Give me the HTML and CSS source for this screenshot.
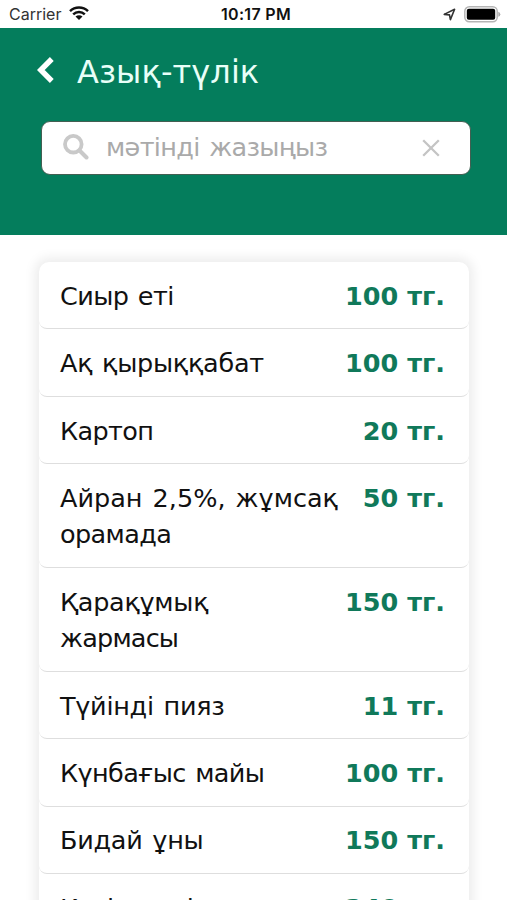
FILE: index.html
```html
<!DOCTYPE html>
<html lang="kk">
<head>
<meta charset="utf-8">
<title>Азық-түлік</title>
<link rel="stylesheet" href="styles.css">
</head>
<body>
<div class="status">
  <div class="status-left"><span>Carrier</span>
    <svg class="wifi" viewBox="0 0 20 14"><path d="M1 5.2a13 13 0 0 1 18 0M4.2 8.3a8.4 8.4 0 0 1 11.6 0" fill="none" stroke="#111" stroke-width="2.5"/><path d="M6.5 10.6a5 5 0 0 1 7 0L10 14z" fill="#111"/></svg>
  </div>
  <div class="time">10:17 PM</div>
  <div class="status-right">
    <svg class="loc" viewBox="0 0 13 13"><path d="M1.2 6.4L11.6 1.3 7.4 11.6 6.5 6.9z" fill="none" stroke="#333" stroke-width="1.6" stroke-linejoin="round"/></svg>
    <svg class="battery" viewBox="0 0 37 17"><rect x=".8" y=".8" width="32.4" height="15" rx="4.5" fill="#fff" stroke="#b5b5b5" stroke-width="1.5"/><rect x="2.8" y="2.8" width="28.4" height="11" rx="2" fill="#000"/><path d="M34.3 5.8q2 .5 2 2.5t-2 2.5z" fill="#aaa"/></svg>
  </div>
</div>
<header class="header">
  <div class="title-row">
    <svg class="back" viewBox="0 0 18 28"><path d="M14.8 3L3.8 14l11 11" fill="none" stroke="#fff" stroke-width="5.4"/></svg>
    <h1 class="title">Азық-түлік</h1>
  </div>
  <div class="search">
    <svg class="glass" viewBox="0 0 26 26"><circle cx="10.3" cy="10.2" r="8.3" fill="none" stroke="#c9c9c9" stroke-width="3.8"/><path d="M16.5 16.5l7 7" stroke="#c9c9c9" stroke-width="4" stroke-linecap="round"/></svg>
    <span class="placeholder">мәтінді жазыңыз</span>
    <svg class="clear" viewBox="0 0 18 18"><path d="M1.2 1.2l15.6 15.6M16.8 1.2L1.2 16.8" stroke="#c4c4c4" stroke-width="2.3"/></svg>
  </div>
</header>
<main class="list">
  <div class="item"><span class="name snug">Сиыр еті</span><b class="price">100 тг.</b></div>
  <div class="item"><span class="name">Ақ қырыққабат</span><b class="price">100 тг.</b></div>
  <div class="item"><span class="name snug">Картоп</span><b class="price">20 тг.</b></div>
  <div class="item"><span class="name"><span class="loose">Айран 2,5%, жұмсақ</span><br><span class="snug">орамада</span></span><b class="price">50 тг.</b></div>
  <div class="item"><span class="name">Қарақұмық<br><span class="tight">жармасы</span></span><b class="price">150 тг.</b></div>
  <div class="item"><span class="name">Түйінді пияз</span><b class="price">11 тг.</b></div>
  <div class="item"><span class="name snug">Күнбағыс майы</span><b class="price">100 тг.</b></div>
  <div class="item"><span class="name">Бидай ұны</span><b class="price">150 тг.</b></div>
  <div class="item"><span class="name tight">Күріш сүті</span><b class="price">240 тг.</b></div>
</main>
</body>
</html>
```
FILE: styles.css
```css
* { box-sizing: border-box; }
body { margin: 0; height: 900px; overflow: hidden; background: #fff; font-family: "DejaVu Sans", sans-serif; color: #111; }
svg { display: block; flex: none; }
.status { height: 28px; display: grid; grid-template-columns: 1fr auto 1fr; align-items: center; padding: 0 6px 0 9px; font-family: Inter, sans-serif; font-size: 16px; }
.status-left { display: flex; align-items: center; gap: 8px; color: #333; }
.wifi { width: 20px; height: 14px; margin-top: -2px; }
.time { font-weight: 600; font-size: 16px; letter-spacing: .3px; padding-left: 2px; }
.status-right { display: flex; align-items: center; justify-content: flex-end; gap: 8px; }
.loc { width: 13px; height: 13px; }
.battery { width: 37px; height: 17px; }
.header { height: 207px; background: #047d5c; padding: 24px 36px 0 37px; }
.title-row { height: 40px; display: flex; align-items: center; gap: 22px; }
.back { width: 18px; height: 28px; margin-top: -4px; }
.title { margin: 0; font-size: 32px; font-weight: 400; line-height: 40px; letter-spacing: .1px; color: #e9fff8; white-space: nowrap; }
.search { margin: 29px 0 0 4px; height: 54px; background: #fff; border: 1.5px solid #435f52; border-radius: 9px; display: flex; align-items: center; padding: 0 30px 0 21px; }
.glass { width: 26px; height: 26px; margin-top: -3px; }
.placeholder { margin: -2px 0 0 17px; flex: 1; font-size: 25.5px; letter-spacing: -.65px; word-spacing: 2px; color: #aaa; white-space: nowrap; }
.clear { width: 18px; height: 18px; }
.list { margin: 27px 38px 0 39px; background: #fff; border-radius: 10px; box-shadow: 0 0 12px 4px rgba(0,0,0,.08); }
.item { display: flex; justify-content: space-between; padding: 15.8px 24px 14.2px 21px; border-bottom: 1px solid #dedede; border-radius: 8px; font-size: 25.5px; line-height: 36.4px; white-space: nowrap; }
.item:last-child { padding-top: 16.4px; }
.name { letter-spacing: -.28px; word-spacing: 2px; }
.snug { letter-spacing: -.6px; }
.tight { letter-spacing: -.8px; }
.loose { letter-spacing: 0; }
.price { color: #10795a; }
```
